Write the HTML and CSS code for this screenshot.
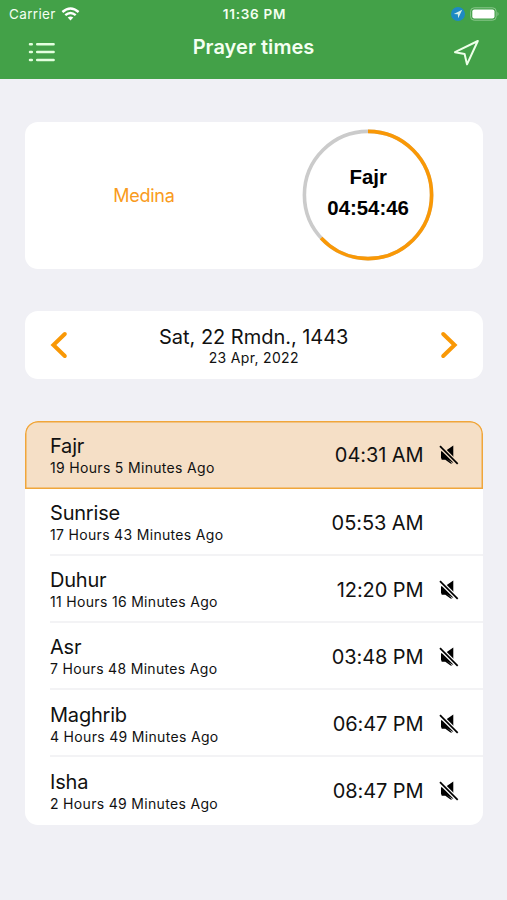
FILE: index.html
```html
<!DOCTYPE html>
<html lang="en">
<head>
<meta charset="utf-8">
<title>Prayer times</title>
<link rel="stylesheet" href="styles.css">
</head>
<body>
<svg width="0" height="0" class="defs" aria-hidden="true">
  <symbol id="mute" viewBox="0 0 20 20">
    <path d="M2 6.2H6L14.3 0.6V18L6.3 13.5H2Z"/>
    <path class="gap" d="M1 1.2L18.7 18.9"/>
    <path class="slash" d="M1 1.2L18.7 18.9"/>
    <path d="M2.6 9.5L13.4 18.6L11.5 18.6L6.3 14.8H2.6Z"/>
  </symbol>
</svg>
<header class="header">
  <div class="status">
    <div class="carrier"><span>Carrier</span>
      <svg width="19" height="14" viewBox="0 0 18 14" fill="none" stroke="#fff" stroke-width="2.4"><path d="M0.9 5Q9 -2.2 17.1 5"/><path d="M3.8 8.2Q9 3.6 14.2 8.2"/><path d="M9 13.4L6.2 10.6Q9 8.4 11.8 10.6Z" fill="#fff" stroke="none"/></svg>
    </div>
    <div class="clock">11:36 PM</div>
    <div class="indicators">
      <svg width="14" height="14" viewBox="0 0 14 14"><circle cx="7" cy="7" r="7" fill="#1e8ac4"/><path d="M11.2 2.8L2.8 6.9L6.8 7.2L7.2 11.2Z" fill="#d5f0e8"/></svg>
      <svg width="30" height="14" viewBox="0 0 30 14"><rect x=".6" y=".8" width="25.6" height="12.4" rx="3.6" fill="none" stroke="#8bc78d"/><rect x="2.3" y="2.5" width="22.2" height="9" rx="2" fill="#fff"/><path d="M27.5 4.8Q29.6 7 27.5 9.2Z" fill="#8bc78d"/></svg>
    </div>
  </div>
  <div class="nav">
    <svg width="28" height="22" viewBox="0 0 28 22" fill="none" stroke="#e4ffdf" stroke-width="2.5" stroke-linecap="round"><path d="M3 3.2H4.8M10.2 3.2H26.6M3 11.1H4.8M10.2 11.1H26.6M3 19H4.8M10.2 19H26.6"/></svg>
    <h1 class="title">Prayer times</h1>
    <svg class="locate" width="27" height="28" viewBox="0 0 27 28" fill="none" stroke="#edffe8" stroke-width="2" stroke-linejoin="round"><path d="M24.8 3L2 14.2L11.6 16L14 26.4Z"/></svg>
  </div>
</header>
<main class="content">
  <section class="card summary">
    <div class="city">Medina</div>
    <div class="timer">
      <svg class="ring" width="132" height="132" viewBox="0 0 132 132" fill="none" stroke-width="3.6"><circle cx="66" cy="66" r="63.6" stroke="#cbcbcb"/><circle cx="66" cy="66" r="63.6" stroke="#f99806" pathLength="100" stroke-dasharray="63.2 100" transform="rotate(-90 66 66)"/></svg>
      <div class="next">Fajr</div>
      <div class="countdown">04:54:46</div>
    </div>
  </section>
  <section class="card date">
    <svg width="18" height="28" viewBox="0 0 18 28" class="chevron"><path d="M14.8 3L3.4 14L14.8 25"/></svg>
    <div class="dates"><div class="hijri">Sat, 22 Rmdn., 1443</div><div class="gregorian">23 Apr, 2022</div></div>
    <svg width="18" height="28" viewBox="0 0 18 28" class="chevron"><path d="M3.2 3L14.6 14L3.2 25"/></svg>
  </section>
  <section class="card list">
    <div class="row active"><div class="info"><div class="name">Fajr</div><div class="ago">19 Hours 5 Minutes Ago</div></div><div class="time">04:31 AM</div><svg class="mute"><use href="#mute"/></svg></div>
    <div class="row"><div class="info"><div class="name">Sunrise</div><div class="ago">17 Hours 43 Minutes Ago</div></div><div class="time">05:53 AM</div><div class="mute"></div></div>
    <div class="row"><div class="info"><div class="name">Duhur</div><div class="ago">11 Hours 16 Minutes Ago</div></div><div class="time">12:20 PM</div><svg class="mute"><use href="#mute"/></svg></div>
    <div class="row"><div class="info"><div class="name">Asr</div><div class="ago">7 Hours 48 Minutes Ago</div></div><div class="time">03:48 PM</div><svg class="mute"><use href="#mute"/></svg></div>
    <div class="row"><div class="info"><div class="name">Maghrib</div><div class="ago">4 Hours 49 Minutes Ago</div></div><div class="time">06:47 PM</div><svg class="mute"><use href="#mute"/></svg></div>
    <div class="row"><div class="info"><div class="name">Isha</div><div class="ago">2 Hours 49 Minutes Ago</div></div><div class="time">08:47 PM</div><svg class="mute"><use href="#mute"/></svg></div>
  </section>
</main>
</body>
</html>
```
FILE: styles.css
```css
* { box-sizing: border-box; }
body { margin: 0; height: 900px; overflow: hidden; background: #f0f0f5; color: #111; font-family: Inter, sans-serif; }
svg { display: block; flex: none; }
.defs { position: absolute; }
.header { height: 79px; background: #43a148; color: #f4fff1; }
.status { height: 28px; padding: 0 7px 0 9px; display: grid; grid-template-columns: 1fr auto 1fr; align-items: center; font-size: 13.5px; line-height: 28px; }
.carrier { display: flex; align-items: center; gap: 5.5px; letter-spacing: .35px; }
.clock { font-weight: 600; font-size: 13.5px; letter-spacing: .75px; }
.indicators { display: flex; justify-content: flex-end; align-items: center; gap: 5px; }
.nav { height: 51px; padding: 0 27px; display: grid; grid-template-columns: 1fr auto 1fr; align-items: start; }
.nav > svg { margin-top: 13px; }
.nav > .locate { margin-top: 10px; justify-self: end; }
.title { margin: 6px 0 0; font-size: 20px; line-height: 26px; font-weight: 600; letter-spacing: .05px; }
.content { padding: 43px 24.5px 0 25px; }
.card { background: #fff; border-radius: 13px; }
.summary { height: 146.5px; display: grid; grid-template-columns: 1fr 1fr; align-items: center; }
.city { padding-left: 9px; text-align: center; color: #f99b20; font-size: 18px; letter-spacing: -.25px; }
.timer { position: relative; justify-self: center; width: 132px; height: 132px; padding-bottom: 4px; display: flex; flex-direction: column; align-items: center; justify-content: center; font: bold 20.4px/31px "Liberation Sans", sans-serif; color: #000; }
.ring { position: absolute; inset: 0; }
.date { height: 68px; margin-top: 42.5px; padding: 0 25px; display: flex; align-items: center; justify-content: space-between; }
.dates { text-align: center; }
.hijri { font-size: 20px; line-height: 24px; letter-spacing: -.03px; }
.gregorian { font-size: 14px; line-height: 17px; letter-spacing: .33px; }
.chevron { fill: none; stroke: #f99806; stroke-width: 4; stroke-linecap: round; }
.list { margin-top: 42px; overflow: hidden; }
.row { height: 67.2px; padding: 2.5px 23.5px 0 0; margin-left: 25px; display: flex; align-items: center; border-bottom: 2px solid #f3f3f5; }
.row:last-child { border-bottom-color: transparent; }
.row.active { height: 67.7px; margin-left: 0; padding: 1px 23.5px 0 25px; background: #f5dfc6; border: 0; box-shadow: inset 0 0 0 1.5px #f0a63b; border-radius: 13px 13px 0 0; }
.info { flex: 1; padding-top: 2px; }
.name { font-size: 20px; line-height: 23px; letter-spacing: -.2px; }
.ago { font-size: 14px; line-height: 20px; letter-spacing: .32px; }
.time { font-size: 20px; letter-spacing: -.08px; }
.mute { width: 20px; height: 20px; margin-left: 15.5px; color: #000; }
.gap { fill: none; stroke: var(--gap, #fff); stroke-width: 4.2; }
.active .mute { --gap: #f5dfc6; }
.slash { fill: none; stroke: #000; stroke-width: 1.7; }
```
